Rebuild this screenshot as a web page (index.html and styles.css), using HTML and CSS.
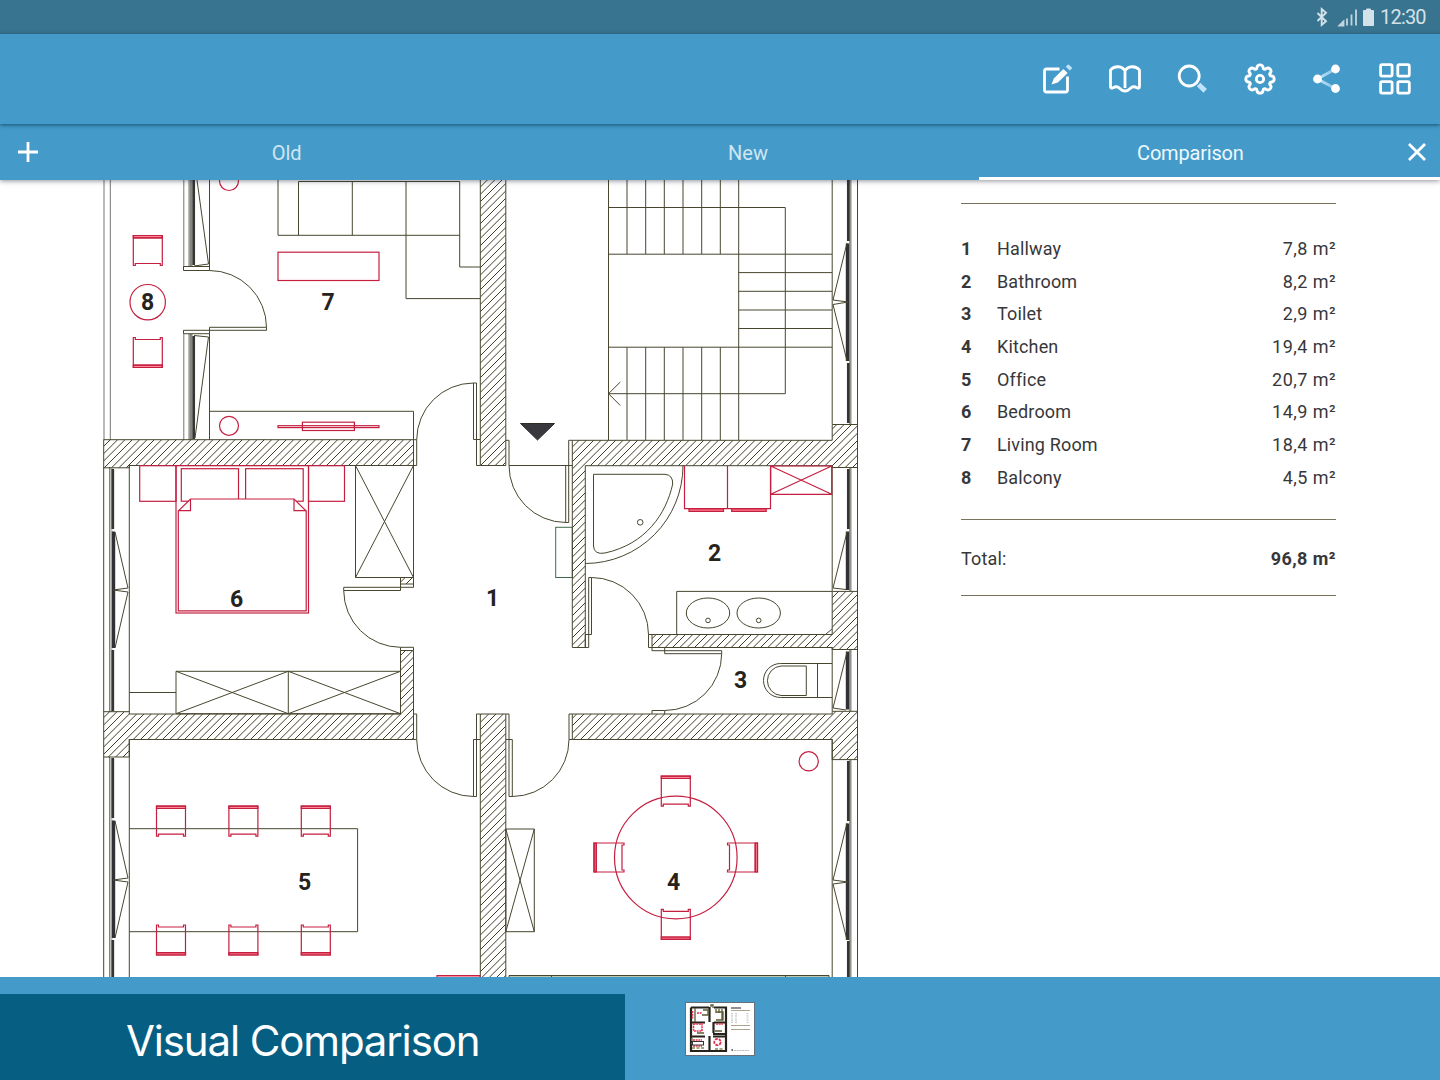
FILE: index.html
```html
<!DOCTYPE html>
<html lang="en">
<head>
<meta charset="utf-8">
<title>Visual Comparison</title>
<link rel="stylesheet" href="styles.css">
</head>
<body>
<div class="app">
  <div class="status">
    <svg class="status-icons" viewBox="0 0 64 24" width="64" height="24" fill="none">
      <path d="M6.500 8l8.500 8.300-4.300 3.700V4l4.300 3.700-8.500 8.300" stroke="#d3e1e8" stroke-width="1.900"/>
      <path d="M28.500 20.500l4-4v4zM36 20.500v-7M40.500 20.500V9.500M45 20.500V4.500" fill="#c3d6df" stroke="#c3d6df" stroke-width="1.800"/>
      <path d="M52.500 5.500h3v-1.500h4v1.500h3v15h-10z" fill="#d3e1e8" stroke="#d3e1e8"/>
    </svg>
    <span class="clock">12:30</span>
  </div>

  <header class="toolbar">
    <svg class="icon" viewBox="0 0 36 36"><path d="M20.500 8H7.500Q5.500 8 5.500 10V29Q5.500 31 7.500 31H26.500Q28.500 31 28.500 29V15.500"/><path class="solid" d="M12.500 23.400l2.300-6L24.300 7.900l4.300 4.200-9.700 9.300z"/><path class="pale-fill" d="M26.800 5.800l2-2.100q.5-.4 1 0l3 2.800q.4.500 0 1l-2 2z"/></svg>
    <svg class="icon" viewBox="0 0 36 36"><path d="M18 10C15.500 4.500 7 4.500 3.500 9V25.500Q3.500 28 6 26.800Q10 24.500 12.500 27.300Q15 30 18 30Q21 30 23.500 27.300Q26 24.500 30 26.800Q32.500 28 32.500 25.500V9C29 4.500 20.500 4.500 18 10V27"/></svg>
    <svg class="icon" viewBox="0 0 36 36"><circle cx="15.200" cy="15" r="10"/><path class="handle" d="M24.600 23.500l6.600 6.400"/></svg>
    <svg class="icon" viewBox="-18 -18 36 36"><path transform="scale(1.02)" d="M-3-11.400A3.050 3.050 0 0 1 3-11.400A1.650 1.650 0 0 0 5.940-10.180A3.050 3.050 0 0 1 10.180-5.940A1.650 1.650 0 0 0 11.400-3A3.050 3.050 0 0 1 11.400 3A1.650 1.650 0 0 0 10.180 5.940A3.050 3.050 0 0 1 5.940 10.180A1.650 1.650 0 0 0 3 11.400A3.050 3.050 0 0 1-3 11.400A1.650 1.650 0 0 0-5.940 10.180A3.050 3.050 0 0 1-10.180 5.940A1.650 1.650 0 0 0-11.400 3A3.050 3.050 0 0 1-11.400-3A1.650 1.650 0 0 0-10.180-5.940A3.050 3.050 0 0 1-5.940-10.180A1.650 1.650 0 0 0-3-11.400Z"/><circle r="3.700"/></svg>
    <svg class="icon" viewBox="0 0 36 36"><defs><linearGradient id="fade" x1="0" x2="1"><stop offset="0" stop-color="#bfe4fa"/><stop offset="1" stop-color="#bfe4fa" stop-opacity=".55"/></linearGradient></defs><path class="link" d="M26.500 8L8.300 18L26.500 27.500"/><g class="solid"><circle cx="26.500" cy="8" r="4.400"/><circle cx="8.500" cy="18" r="4.400"/><circle cx="26.500" cy="27.500" r="4.400"/></g></svg>
    <svg class="icon" viewBox="0 0 36 36"><rect x="3.600" y="3.600" width="11.500" height="11.500" rx="1.500"/><rect x="20.800" y="3.600" width="11.500" height="11.500" rx="1.500"/><rect x="3.600" y="20.600" width="11.500" height="11.500" rx="1.500"/><rect x="20.800" y="20.600" width="11.500" height="11.500" rx="1.500"/></svg>
  </header>

  <nav class="tabs">
    <button class="tab-btn add" aria-label="Add"><svg viewBox="0 0 20 20" width="20" height="20"><path d="M10 0V20M0 10H20"/></svg></button>
    <div class="tab">Old</div>
    <div class="tab">New</div>
    <div class="tab active"><span>Comparison</span><svg class="close" viewBox="0 0 20 20" width="20" height="20"><path d="M2 2L18 18M18 2L2 18"/></svg></div>
  </nav>

  <main class="sheet">
    <svg class="plan" viewBox="0 180 900 797" width="900" height="797">
      <defs>
        <pattern id="hatch" width="22" height="22" patternUnits="userSpaceOnUse"><path d="M-1 8.330L8.330-1M-1 15.670L15.670-1M-1 23L23-1M6.330 23L23 6.330M13.670 23L23 13.670" stroke="#3f3d20" stroke-width="1"/></pattern>
        <g id="chair"><path fill="#ff8796" d="M0 0H29V2.300H0z"/><path d="M0 30V0H29V30H27V28H2V30ZM0 2.300H29"/></g>
      </defs>

      <g class="ink">
        <!-- balcony and living room window -->
        <path d="M104 180V440M110.300 180V440M183.800 180V267M189 180V266M183.800 334V440M189 334V440" class="soft"/>
        <path d="M191 180V266M191 334V440" class="frame"/>
        <path d="M193.700 180V265M193.700 336V439" class="pane"/>
        <path d="M209.500 180V270.500M197 180L208.500 264L194 266M209.500 330V440M194 335.500L208.500 337L195 438"/>
        <path d="M183.500 266.500H209.500V270.500H183.500ZM183.500 330.300H209.500V333.700H183.500Z"/>
        <path d="M209.500 270.500A57 57 0 0 1 266.500 327.300V330.300H209.500V327.300H266.500"/>
        <!-- sofa -->
        <path d="M278 180V235.300H459.700M298.500 235V181.500H459.700V267H480M352.300 181.500V235.300M406 181.500V298.600H480"/>
        <path d="M209.500 411.300H413.500V440"/>
        <!-- hall doors, top -->
        <path d="M413.500 439.700H416.700V465.500H413.500M416.700 439.700A57 57 0 0 1 473.500 383H476.500V465.500H480M473.500 383V439.500H480"/>
        <path d="M505.800 440.300H509V465.500H572.300M568.700 465.500V440.300H572.300M509 465.500A57 57 0 0 0 565.700 522.500H568.700V465.500M565.700 465.500V522.500"/>
        <!-- stairs -->
        <path d="M608.500 180V440M627 180V254M645.700 180V254M664.300 180V254M683 180V254M701.700 180V254M720.300 180V254M738.700 180V440M627 347.200V440M645.700 347.200V440M664.300 347.200V440M683 347.200V440M701.700 347.200V440M720.300 347.200V440"/>
        <path d="M608.500 207.500H785.300V393.700H608.500M620.300 382L608.500 393.700L620.300 405.500M608.500 254.200H832M608.500 347.200H832M738.700 272.600H832M738.700 291.300H832M738.700 310H832M738.700 328.500H832"/>
        <!-- right facade -->
        <path d="M832.200 180V424M857.500 180V977M832.200 465V591M832.200 647V711M832.200 739V977"/>
        <path class="frame right" d="M850.300 180V424M850.300 468V591M850.300 650V711M850.300 760V977"/>
        <path class="pane" d="M848.300 180V241M848.300 363V423M848.300 469V529M848.300 761V821M848.300 941V977"/>
        <path class="sash" d="M847.500 243.500V361M847.500 531.500V590M847.500 651.500V709.500M847.500 823.500V940"/>
        <path d="M847 243L833 300L848 302L833 304.500L847 361M847 532L833 588L846 589.500M847 652L833 708L846 710M847 823L833 880L848 882L833 884L847 940"/>
        <!-- left facade -->
        <path d="M103.700 467V712M103.700 757V977M129.300 465V712M129.300 739V977M109.500 467V712M109.500 757V977"/>
        <path class="frame left" d="M111 468V712M111 758V977"/>
        <path class="pane" d="M112.800 469V529M112.800 650V711M112.800 758V818M112.800 940V977"/>
        <path class="sash" d="M113.500 531.500V648M113.500 820.500V938"/>
        <path d="M115 532L128 588L113 590L128 592L115 648M115 821L128 878L113 880L128 882L115 938"/>
        <!-- bedroom -->
        <path d="M355.500 465.500H413.500V577.500H355.500ZL413.500 577.500M413.500 465.500L355.500 577.500"/>
        <path d="M400.500 584V590.500H343.700V587.300H413.500V584M343.700 590.500A57 57 0 0 0 400.500 647.300M400.500 650.500V647.300H413.500V650.500"/>
        <path d="M176 671.300H400.500V713.700H176ZL288.300 713.700L400.500 671.300M176 713.700L288.300 671.300L400.500 713.700M288.300 671.300V713.700M129.300 692.500H176"/>
        <!-- bathroom -->
        <path d="M683 465.700A98 98 0 0 1 585.300 563.500M593.500 474.300H665Q673 475 672.700 484C666 514 646 544 605 553Q594 555 593.500 546Z"/>
        <circle cx="640.200" cy="522.300" r="2.800"/>
        <path d="M676.700 634V591.400H832M826 634L832 629"/>
        <ellipse cx="708" cy="613" rx="21.700" ry="15"/><ellipse cx="758.700" cy="613" rx="21.700" ry="15"/>
        <circle cx="708" cy="620.400" r="2.300"/><circle cx="758.700" cy="620.400" r="2.300"/>
        <path d="M585.300 634.500V647.500H588.700V577.500H591.500V634.500H585.300M591.500 577.500A57 57 0 0 1 648.500 634.500M652 634.500H648.500V647.500H652"/>
        <!-- toilet -->
        <path d="M652 647.500V650.700H721.700V653.700H664.700V647.500M721.700 653.700A57 57 0 0 1 664.700 710.500M652 714V710.500H664.700V714"/>
        <path d="M832 663.500H780.500A17 17 0 0 0 780.500 697.500H832M806.300 666H781A14.800 14.800 0 0 0 781 695.500H806.300ZM817.500 663.500V697.500"/>
        <!-- hall doors, bottom -->
        <path d="M413.500 714H416.700V739.500H413.500M416.700 739.500A57 57 0 0 0 473.500 796.500H476.500V714H480M473.500 796.500V739.500H480"/>
        <path d="M505.800 714H509V796.500H512.300V739.500H505.800M512.300 796.500A57 57 0 0 0 569 739.500V714H572.300M569 739.500H572.300"/>
        <!-- office, kitchen -->
        <path d="M129.300 828.700H357.600V931.700H129.300"/>
        <path d="M505.800 829H534.300V931.700H505.800ZL534.300 931.700M534.300 829L505.800 931.700"/>
        <path fill="#bcc8ac" d="M509 975.500H829V979H509ZM551.500 975V978M785.500 975V978"/>
      </g>

      <rect class="panel" x="555.700" y="527.300" width="16.600" height="50.200"/>
      <path class="entry" d="M520.500 423.500H554.500L537.500 440Z"/>

      <g class="wall">
        <path d="M103.700 439.700H413.500V465.500H129.300V467.800H103.700Z"/>
        <path d="M480.300 178V465.500H505.800V178"/>
        <path d="M572.300 440.300H832.200V424.500H857.500V467.500H832.200V465.700H585.300V647.500H572.300Z"/>
        <path d="M652 634.500H832.200V591.400H857.500V649.500H832.200V647.500H652Z"/>
        <path d="M572.300 714H832.200V711.300H857.500V759.600H832.200V739.500H572.300Z"/>
        <path d="M103.700 711.700H129.300V714H400.500V650.500H413.500V739.500H129.300V757H103.700Z"/>
        <path d="M400.500 577.500H413.500V584H400.500Z"/>
        <path d="M480.300 980V714H505.800V980"/>
      </g>

      <g class="red">
        <circle cx="229" cy="181" r="9.500"/><circle cx="229" cy="425.800" r="9.500"/><circle cx="147.700" cy="302.200" r="17.700"/>
        <rect x="278" y="252.200" width="101" height="28.300"/>
        <rect x="278" y="425.700" width="101" height="1.900"/><rect x="302.400" y="422.200" width="52" height="8.300"/>
        <use href="#chair" x="133.300" y="235.500"/><use href="#chair" transform="matrix(1 0 0 -1 133.300 367.500)"/>
        <rect x="139.700" y="465.700" width="36.300" height="35.600"/><rect x="308.500" y="465.700" width="36" height="35.600"/>
        <rect x="176" y="465.700" width="132.500" height="147.300"/>
        <rect x="181.300" y="468.700" width="57.200" height="32.500"/><rect x="245.600" y="468.700" width="57.600" height="32.500"/>
        <path class="cover" d="M190.500 499H294L306.200 511V610.800H178.300V511Z"/>
        <path d="M190.500 499V510.700H178.300M294 499V510.700H306.200"/>
        <path d="M684.500 465.700V508.700H770.500V465.700M727.500 465.700V508.700"/>
        <path fill="#ff7c90" d="M689 509H723.500V511.300H689ZM731.700 509H766.200V511.300H731.700Z"/>
        <path d="M770.700 466H831.700V494.300H770.700ZL831.700 494.300M831.700 466L770.700 494.300"/>
        <use href="#chair" x="156.500" y="806.200"/><use href="#chair" x="228.900" y="806.200"/><use href="#chair" x="301.300" y="806.200"/>
        <use href="#chair" transform="matrix(1 0 0 -1 156.500 955)"/><use href="#chair" transform="matrix(1 0 0 -1 228.900 955)"/><use href="#chair" transform="matrix(1 0 0 -1 301.300 955)"/>
        <circle cx="675.800" cy="857.500" r="61.300"/><circle cx="808.700" cy="761.300" r="9.600"/>
        <use href="#chair" x="661.300" y="776.200"/><use href="#chair" transform="matrix(1 0 0 -1 661.300 939.300)"/>
        <use href="#chair" transform="matrix(0 1 1 0 594 843)"/><use href="#chair" transform="matrix(0 1 -1 0 757.500 843)"/>
        <path fill="#ff8796" d="M437 975.500H480V979H437Z"/>
      </g>

      <g class="room">
        <text x="147.500" y="310">8</text><text x="328" y="310">7</text><text x="236.500" y="606.500">6</text><text x="492.500" y="605.500">1</text>
        <text x="714.500" y="560.500">2</text><text x="740.500" y="688">3</text><text x="304.500" y="889.500">5</text><text x="673.500" y="889.500">4</text>
      </g>
    </svg>

    <section class="legend">
      <ol class="rooms">
        <li><b>1</b><span>Hallway</span><em>7,8 m²</em></li>
        <li><b>2</b><span>Bathroom</span><em>8,2 m²</em></li>
        <li><b>3</b><span>Toilet</span><em>2,9 m²</em></li>
        <li><b>4</b><span>Kitchen</span><em>19,4 m²</em></li>
        <li><b>5</b><span>Office</span><em>20,7 m²</em></li>
        <li><b>6</b><span>Bedroom</span><em>14,9 m²</em></li>
        <li><b>7</b><span>Living Room</span><em>18,4 m²</em></li>
        <li><b>8</b><span>Balcony</span><em>4,5 m²</em></li>
      </ol>
      <div class="total"><span>Total:</span><b>96,8 m²</b></div>
    </section>
  </main>

  <footer class="bottom">
    <div class="caption">Visual Comparison</div>
    <svg class="thumb" viewBox="0 0 70 54" width="70" height="54" fill="none">
      <rect x=".5" y=".5" width="69" height="53" fill="#fff" stroke="#65717a"/>
      <path d="M6 5.500H24M29 5.500H41V49H6V5.500M5.500 20.500H20M29 20.500H41M6 34.500H20M28 34.500H41M24.500 5V20M24.500 34V49M28.500 20V31M28 32H41" stroke="#25231a" stroke-width="2.200"/>
      <path d="M10 6V20M31 10H38V18H31M31 7V11M34 7V11M37 7V18M26 5V3H28V6M18 8H23V13H17M30 29H37M12 31H19" stroke="#5c5833" stroke-width="1.300"/>
      <path d="M7 36V42M7 46H19M30 47H39" stroke="#8a8450" stroke-width="1.500" stroke-dasharray="3 1.500"/>
      <path d="M7.500 9V17M12 11H17M8.500 22H17V29H8.500ZM31 22H38M8 38H17M8 44H17" stroke="#e5304f" stroke-width="1.500" stroke-dasharray="2 .7"/>
      <rect x="7.500" y="39.500" width="11" height="3.500" stroke="#333"/>
      <circle cx="32.500" cy="40" r="3.200" stroke="#e5304f" stroke-width="1.800" stroke-dasharray="3 1"/>
      <path d="M46 6H56" stroke="#444" stroke-width="1.200"/><path d="M46 8.500H65M46 23.500H65M46 27.500H65" stroke="#aaa38f"/>
      <path d="M47 11V21M51 11V21M62.500 11V21" stroke="#ccc" stroke-width="2" stroke-dasharray="1 .8"/>
      <path d="M46.500 48H48" stroke="#333" stroke-width="1.500"/><path d="M49 48.500H64" stroke="#bbb" stroke-dasharray="2 .7"/>
    </svg>
  </footer>
</div>
</body>
</html>
```
FILE: styles.css
```css
* { box-sizing: border-box; }

body {
  margin: 0;
  background: #fff;
  font-family: Roboto, "Liberation Sans", sans-serif;
}

.app {
  display: flex;
  flex-direction: column;
  width: 1440px;
  height: 1080px;
  overflow: hidden;
}

.status {
  display: flex;
  flex: none;
  align-items: center;
  justify-content: flex-end;
  gap: 5px;
  height: 34px;
  padding-right: 14px;
  background: #38748f;
}

.clock {
  width: 46px;
  color: #d3e1e8;
  font-size: 20px;
  letter-spacing: -0.8px;
  white-space: nowrap;
}

.toolbar {
  z-index: 3;
  display: flex;
  flex: none;
  align-items: center;
  justify-content: flex-end;
  gap: 31.6px;
  height: 90px;
  padding-right: 27px;
  background: #449bc9;
  box-shadow: 0 1px 4px rgba(10, 60, 90, 0.8);
}

.icon {
  width: 36px;
  height: 36px;
  fill: none;
  stroke: #fff;
  stroke-width: 2.8;
  stroke-linejoin: round;
}

.icon .solid { fill: #fff; stroke: none; }
.icon .pale-fill { fill: #bfe4fa; stroke: none; }
.icon .handle { stroke: #bfe4fa; stroke-width: 5; }
.icon .link { stroke: url(#fade); stroke-width: 3; }

.tabs {
  z-index: 2;
  display: grid;
  flex: none;
  grid-template-columns: 56px 1fr 1fr 1fr;
  height: 56px;
  background: #449bc9;
  box-shadow: 0 1px 5px rgba(30, 40, 60, 0.5);
}

.tab,
.tab-btn {
  display: flex;
  align-items: center;
  justify-content: center;
}

.tab {
  padding-top: 2px;
  color: #cfe5f1;
  font-size: 20px;
}

.tab-btn {
  padding: 0;
  border: 0;
  background: none;
}

.tabs svg { fill: none; stroke: #fff; stroke-width: 2.8; }

.tab.active {
  padding: 5px 13px 0 0;
  border-bottom: 3px solid #fff;
  color: #eef8fd;
}

.tab.active span {
  flex: 1;
  padding-right: 5px;
  letter-spacing: -0.2px;
  text-align: center;
}

.close { margin-bottom: 2px; }

.sheet {
  display: flex;
  flex: 1;
  min-height: 0;
  overflow: hidden;
  background: #fff;
}

.plan { flex: none; }
.plan .ink { fill: none; stroke: #48462f; }
.plan .ink .soft { stroke: #777570; }
.plan .ink .frame { stroke: #85847d; stroke-width: 3; }
.plan .ink .frame.left { stroke: #c2c2bd; }
.plan .ink .frame.right { stroke: #96958d; stroke-width: 2.5; }
.plan .ink .pane { stroke: #353532; stroke-width: 2.7; }
.plan .ink .sash { stroke: #303035; stroke-width: 3.4; }
.plan .wall { fill: url(#hatch); stroke: #48462f; }
.plan .red { fill: none; stroke: #c51f40; stroke-width: 1.2; }
.plan .red .cover { fill: #fff; }
.plan .panel { fill: none; stroke: #41694a; }
.plan .entry { fill: #38383d; stroke: #302a25; }

.room {
  fill: #26231d;
  font: bold 23px Roboto, sans-serif;
  text-anchor: middle;
}

.legend {
  width: 375px;
  margin: 23px 0 0 61px;
  border-top: 1px solid #77745b;
  color: #37373a;
  font-size: 18px;
  letter-spacing: 0.45px;
}

.legend span { letter-spacing: 0.15px; }

.rooms {
  margin: 0;
  padding: 28px 0 25px;
  list-style: none;
}

.rooms li {
  display: grid;
  grid-template-columns: 36px 1fr auto;
  align-items: center;
  height: 32.7px;
}

.rooms em { font-style: normal; }

.total {
  display: flex;
  align-items: center;
  justify-content: space-between;
  height: 77px;
  padding-top: 2px;
  border: solid #77745b;
  border-width: 1px 0;
}

.bottom {
  z-index: 1;
  display: flex;
  flex: none;
  align-items: flex-start;
  height: 103px;
  background: #449bc9;
}

.caption {
  width: 625px;
  height: 86px;
  margin-top: 17px;
  padding-left: 126px;
  background: #065f83;
  color: #fff;
  font: 400 42px/93px Inter, sans-serif;
  letter-spacing: -1.15px;
  white-space: nowrap;
}

.thumb { margin: 25px 0 0 60px; }
```
